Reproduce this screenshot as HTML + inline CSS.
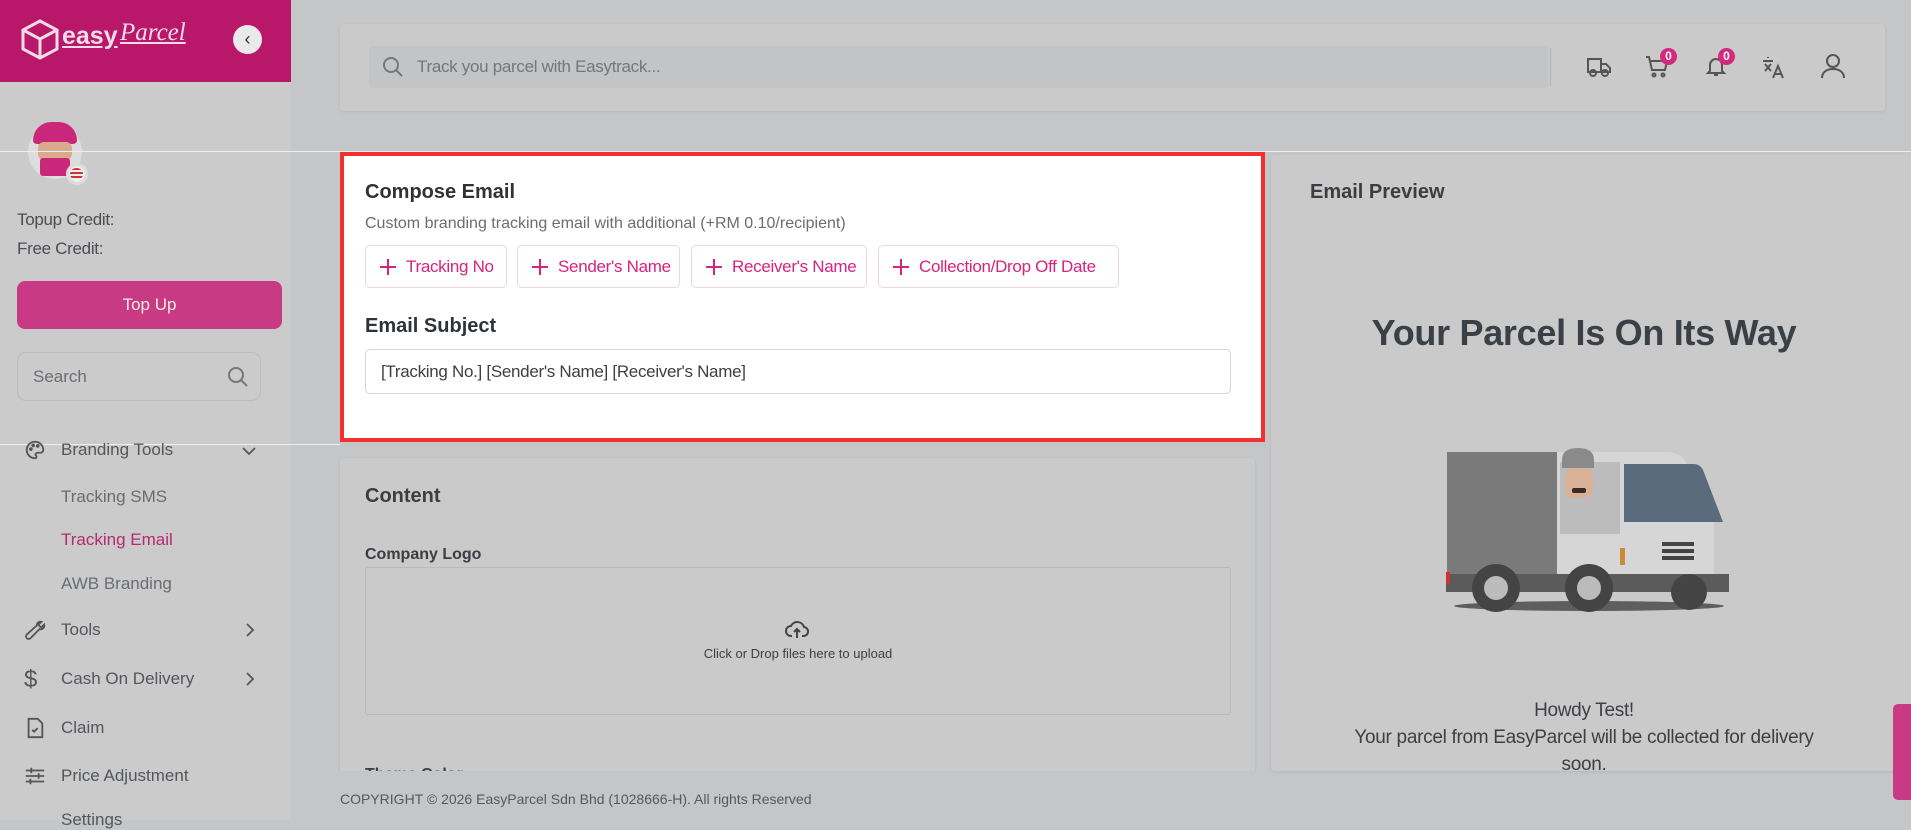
<!DOCTYPE html>
<html><head><meta charset="utf-8"><style>
*{box-sizing:border-box;margin:0;padding:0}
body{width:1911px;height:820px;overflow:hidden;background:#c5c6c8;font-family:"Liberation Sans",sans-serif;position:relative;color:#4a4d52}
.a{position:absolute}
.side{left:0;top:0;width:291px;height:820px;background:#cbcbcb}
.card{background:#cacaca;border-radius:4px;box-shadow:0 1px 3px rgba(0,0,0,.08)}
.mi{position:absolute;left:61px;font-size:17px;color:#53565b}
.ic{position:absolute;left:24px;width:22px;height:22px}
.chev{position:absolute;left:243px}
.chip{position:absolute;top:245px;height:43px;border:1px solid #f1d3e2;border-radius:5px;color:#d6237e;font-size:17px;line-height:41px;padding-left:40px;letter-spacing:-0.3px}
.chip:before{content:"";position:absolute;left:14px;top:13px;width:16px;height:16px;background:linear-gradient(#d6237e,#d6237e) center/2px 16px no-repeat,linear-gradient(#d6237e,#d6237e) center/16px 2px no-repeat}
</style></head><body>
<div class="a side"></div>
<div class="a" style="left:0;top:0;width:291px;height:82px;background:#b9186a"></div>
<svg class="a" style="left:20px;top:18px" width="40" height="42" viewBox="0 0 40 42" fill="none" stroke="#f3dbe7" stroke-width="3"><path d="M20 3 37 12v19L20 40 3 31V12z M3 12l17 9 17-9 M20 21v19"/></svg>
<div class="a" style="left:62px;top:22px;color:#f3dbe7;font-size:25px;font-weight:bold;text-decoration:underline">easy</div>
<div class="a" style="left:120px;top:19px;color:#f3dbe7;font-size:25px;font-style:italic;font-family:'Liberation Serif',serif;text-decoration:underline">Parcel</div>
<div class="a" style="left:233px;top:25px;width:29px;height:29px;border-radius:50%;background:#eaeaea;color:#333;text-align:center;line-height:28px;font-size:18px">‹</div>
<div class="a" style="left:28px;top:125px;width:54px;height:54px;border-radius:50%;background:#ddd"></div>
<div class="a" style="left:33px;top:122px;width:44px;height:22px;border-radius:20px 20px 4px 4px;background:#c9287a"></div>
<div class="a" style="left:38px;top:142px;width:34px;height:18px;background:#d9ab8c;border-radius:6px"></div>
<div class="a" style="left:40px;top:158px;width:30px;height:18px;background:#c9287a;border-radius:3px"></div>
<div class="a" style="left:66px;top:163px;width:22px;height:22px;border-radius:50%;background:#eee;border:3px solid #ddd"></div>
<div class="a" style="left:70px;top:168px;width:13px;height:12px;border-radius:50%;background:repeating-linear-gradient(#c33 0 2px,#eee 2px 4px)"></div>
<div class="a" style="left:17px;top:210px;font-size:17px;letter-spacing:-0.3px">Topup Credit:</div>
<div class="a" style="left:17px;top:239px;font-size:17px;letter-spacing:-0.3px">Free Credit:</div>
<div class="a" style="left:17px;top:281px;width:265px;height:48px;border-radius:8px;background:#c93a85;color:#eed;text-align:center;line-height:48px;font-size:17px">Top Up</div>
<div class="a" style="left:17px;top:352px;width:244px;height:49px;border:1px solid #bdbdbd;border-radius:9px;font-size:17px;line-height:47px;padding-left:15px;color:#6a6d72">Search</div>
<svg class="a" style="left:226px;top:365px" width="24" height="24" fill="none" stroke="#777" stroke-width="2"><circle cx="10" cy="10" r="7"/><path d="M15 15l6 6"/></svg>
<div class="a" style="left:0;top:151px;width:1911px;height:1px;background:#eee"></div>
<div class="a" style="left:0;top:444px;width:340px;height:1px;background:#eee"></div>
<svg class="ic" style="top:439px" viewBox="0 0 24 24" fill="none" stroke="#555" stroke-width="2"><path d="M12 3a9 9 0 1 0 0 18c2 0 2-2 1-3s0-3 2-3h3a3 3 0 0 0 3-3c0-5-4-9-9-9z"/><circle cx="7.5" cy="11" r="1"/><circle cx="10" cy="7" r="1"/><circle cx="15" cy="7.5" r="1"/></svg>
<div class="mi" style="top:440px">Branding Tools</div>
<svg class="a" style="left:242px;top:446px" width="14" height="10" fill="none" stroke="#555" stroke-width="1.8"><path d="M1 2l6 6 6-6"/></svg>
<div class="mi" style="top:487px;color:#696c70">Tracking SMS</div>
<div class="mi" style="top:530px;color:#b52a73">Tracking Email</div>
<div class="mi" style="top:574px;color:#696c70">AWB Branding</div>
<svg class="ic" style="top:619px" viewBox="0 0 24 24" fill="none" stroke="#555" stroke-width="2"><path d="M14 7a4 4 0 0 1 5-4l-3 3 1 2 2 1 3-3a4 4 0 0 1-5 5L7 21a2 2 0 0 1-4-4z"/></svg>
<div class="mi" style="top:620px">Tools</div>
<svg class="a" style="left:245px;top:623px" width="10" height="14" fill="none" stroke="#555" stroke-width="1.8"><path d="M2 1l6 6-6 6"/></svg>
<div class="ic" style="top:666px;font-size:24px;color:#555">$</div>
<div class="mi" style="top:669px">Cash On Delivery</div>
<svg class="a" style="left:245px;top:672px" width="10" height="14" fill="none" stroke="#555" stroke-width="1.8"><path d="M2 1l6 6-6 6"/></svg>
<svg class="ic" style="top:717px" viewBox="0 0 24 24" fill="none" stroke="#555" stroke-width="2"><path d="M5 2h10l5 5v15H5z M9 14l2 2 4-4"/></svg>
<div class="mi" style="top:718px">Claim</div>
<svg class="ic" style="top:765px" viewBox="0 0 24 24" fill="none" stroke="#555" stroke-width="2"><path d="M2 6h20M2 12h20M2 18h20M8 3v6M16 9v6M7 15v6"/></svg>
<div class="mi" style="top:766px">Price Adjustment</div>
<div class="mi" style="top:810px">Settings</div>

<div class="a card" style="left:340px;top:24px;width:1545px;height:87px"></div>
<div class="a" style="left:369px;top:46px;width:1179px;height:42px;background:#c3c4c6;border-radius:4px;font-size:17px;line-height:42px;padding-left:48px;color:#73767a;letter-spacing:-0.3px">Track you parcel with Easytrack...</div>
<svg class="a" style="left:382px;top:56px" width="22" height="22" fill="none" stroke="#777" stroke-width="2"><circle cx="9" cy="9" r="7"/><path d="M14 14l6 6"/></svg>
<div class="a" style="left:1550px;top:48px;width:1px;height:38px;background:#b5b5b5"></div>
<svg class="a" style="left:1586px;top:56px" width="26" height="22" fill="none" stroke="#555" stroke-width="2"><path d="M2 3h13v13H2z M15 8h5l4 4v4h-9"/><circle cx="7" cy="17" r="3"/><circle cx="19" cy="17" r="3"/></svg>
<svg class="a" style="left:1645px;top:54px" width="24" height="24" fill="none" stroke="#555" stroke-width="2"><path d="M1 3h3l3 13h13l2-9H6"/><circle cx="9" cy="21" r="1.5"/><circle cx="18" cy="21" r="1.5"/></svg>
<div class="a" style="left:1660px;top:48px;width:17px;height:17px;border-radius:50%;background:#d32a7f;color:#fff;font-size:12px;font-weight:bold;text-align:center;line-height:17px">0</div>
<svg class="a" style="left:1704px;top:54px" width="24" height="24" fill="none" stroke="#555" stroke-width="2"><path d="M6 17V11a6 6 0 0 1 12 0v6l2 2H4z M10 21h4"/></svg>
<div class="a" style="left:1718px;top:48px;width:17px;height:17px;border-radius:50%;background:#d32a7f;color:#fff;font-size:12px;font-weight:bold;text-align:center;line-height:17px">0</div>
<svg class="a" style="left:1760px;top:54px" width="26" height="26" fill="none" stroke="#555" stroke-width="2"><path d="M3 7h10 M5 10l6 7 M11 10l-6 7 M8 3v1 M13 24l5-12 5 12 M15 20h6"/></svg>
<svg class="a" style="left:1820px;top:53px" width="26" height="26" fill="none" stroke="#555" stroke-width="2"><circle cx="13" cy="8" r="6"/><path d="M2 25c0-6 5-9 11-9s11 3 11 9"/></svg>

<div class="a" style="left:340px;top:152px;width:925px;height:290px;background:#fff;border:4px solid #f23030"></div>
<div class="a" style="left:365px;top:181px;font-size:20px;font-weight:bold;color:#2f3238">Compose Email</div>
<div class="a" style="left:365px;top:215px;font-size:16px;color:#6a6d72">Custom branding tracking email with additional (+RM 0.10/recipient)</div>
<div class="chip" style="left:365px;width:142px">Tracking No</div>
<div class="chip" style="left:517px;width:163px">Sender's Name</div>
<div class="chip" style="left:691px;width:176px">Receiver's Name</div>
<div class="chip" style="left:878px;width:241px">Collection/Drop Off Date</div>
<div class="a" style="left:365px;top:315px;font-size:20px;font-weight:bold;color:#2f3238">Email Subject</div>
<div class="a" style="left:365px;top:349px;width:866px;height:45px;border:1px solid #d6d6d6;border-radius:5px;font-size:17px;line-height:43px;padding-left:15px;color:#3c3f44;letter-spacing:-0.3px">[Tracking No.] [Sender's Name] [Receiver's Name]</div>

<div class="a card" style="left:340px;top:458px;width:915px;height:320px"></div>
<div class="a" style="left:365px;top:485px;font-size:20px;font-weight:bold;color:#3a3d42">Content</div>
<div class="a" style="left:365px;top:546px;font-size:16px;font-weight:bold;color:#3a3d42">Company Logo</div>
<div class="a" style="left:365px;top:567px;width:866px;height:148px;border:1px solid #b9b9b9;border-radius:3px"></div>
<svg class="a" style="left:785px;top:618px" width="24" height="22" fill="none" stroke="#444" stroke-width="2"><path d="M7 18H6a5 5 0 0 1 0-10 7 7 0 0 1 13 1 4 4 0 0 1-1 9h-1 M12 20v-9 M9 14l3-3 3 3"/></svg>
<div class="a" style="left:365px;top:646px;width:866px;text-align:center;font-size:13px;color:#3c3f44">Click or Drop files here to upload</div>
<div class="a" style="left:365px;top:766px;font-size:16px;font-weight:bold;color:#3a3d42">Theme Color</div>
<div class="a" style="left:291px;top:771px;width:1620px;height:49px;background:#c5c6c8"></div>
<div class="a" style="left:340px;top:791px;font-size:14px;color:#55585d">COPYRIGHT © 2026 EasyParcel Sdn Bhd (1028666-H). All rights Reserved</div>

<div class="a card" style="left:1271px;top:155px;width:640px;height:616px"></div>
<div class="a" style="left:1310px;top:181px;font-size:20px;font-weight:bold;color:#3a3d42">Email Preview</div>
<div class="a" style="left:1271px;top:312px;width:626px;text-align:center;font-size:36px;font-weight:bold;color:#3b3f46;letter-spacing:-0.3px">Your Parcel Is On Its Way</div>
<svg class="a" style="left:1444px;top:442px" width="290" height="170" viewBox="0 0 290 170">
<ellipse cx="145" cy="164" rx="135" ry="5" fill="#5e5e5e"/>
<rect x="3" y="10" width="110" height="122" fill="#7a7a7a"/>
<path d="M113 10h110q14 0 20 12l22 38q5 10 5 20v52H113z" fill="#d6d6d6"/>
<path d="M180 22h70q6 0 9 6l20 52h-99z" fill="#5b6b7e"/>
<rect x="116" y="20" width="60" height="72" fill="#bcbcbc"/>
<path d="M118 18q0-12 16-12t16 12v8h-32z" fill="#8a8a8a"/>
<rect x="121" y="26" width="28" height="30" rx="9" fill="#d8b197"/>
<rect x="128" y="46" width="14" height="5" rx="2" fill="#3b2a23"/>
<rect x="176" y="106" width="5" height="17" fill="#c98b3a"/>
<rect x="218" y="100" width="32" height="4" fill="#444"/><rect x="218" y="107" width="32" height="4" fill="#444"/><rect x="218" y="114" width="32" height="4" fill="#444"/>
<rect x="2" y="132" width="283" height="18" fill="#5b5b5b"/>
<rect x="2" y="130" width="4" height="12" fill="#c33"/>
<circle cx="52" cy="146" r="24" fill="#444"/><circle cx="52" cy="146" r="12" fill="#bbb"/>
<circle cx="145" cy="146" r="24" fill="#444"/><circle cx="145" cy="146" r="12" fill="#bbb"/>
<circle cx="245" cy="150" r="18" fill="#444"/>
</svg>
<div class="a" style="left:1271px;top:697px;width:626px;text-align:center;font-size:19px;line-height:27px;color:#3c3f44;letter-spacing:-0.3px">Howdy Test!<br>Your parcel from EasyParcel will be collected for delivery<br>soon.</div>
<div class="a" style="left:1893px;top:704px;width:22px;height:96px;border-radius:5px 0 0 5px;background:#c93a85"></div>
</body></html>
